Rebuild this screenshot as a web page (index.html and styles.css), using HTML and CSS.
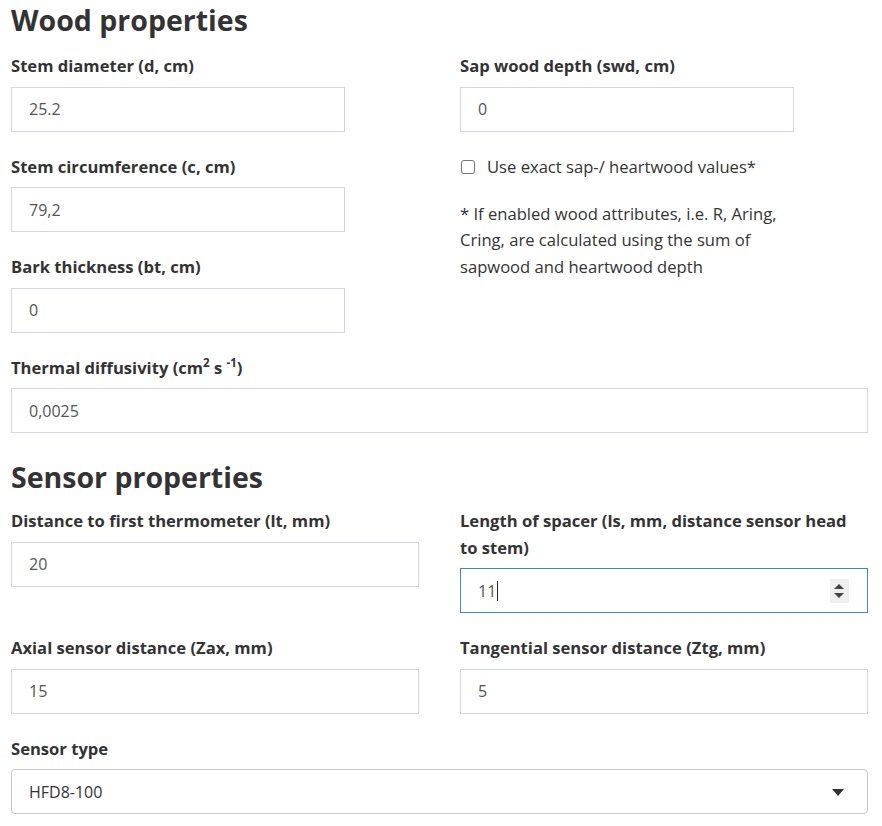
FILE: index.html
```html
<!DOCTYPE html>
<html>
<head>
<meta charset="utf-8">
<link rel="stylesheet" href="styles.css">
</head>
<body>
<div class="page">
  <h2 class="section-title">Wood properties</h2>
  <div class="row row-wood">
    <div class="col">
      <div class="group">
        <label class="lbl">Stem diameter (d, cm)</label>
        <div class="inp narrow">25.2</div>
      </div>
      <div class="group">
        <label class="lbl">Stem circumference (c, cm)</label>
        <div class="inp narrow">79,2</div>
      </div>
      <div class="group">
        <label class="lbl">Bark thickness (bt, cm)</label>
        <div class="inp narrow">0</div>
      </div>
    </div>
    <div class="col">
      <div class="group">
        <label class="lbl">Sap wood depth (swd, cm)</label>
        <div class="inp narrow">0</div>
      </div>
      <div class="check-row">
        <span class="checkbox"></span>
        <span class="check-text">Use exact sap-/ heartwood values*</span>
      </div>
      <p class="note">* If enabled wood attributes, i.e. R, Aring,<br>Cring, are calculated using the sum of<br>sapwood and heartwood depth</p>
    </div>
  </div>
  <div class="group">
    <label class="lbl">Thermal diffusivity (cm<sup>2</sup> s <sup>-1</sup>)</label>
    <div class="inp">0,0025</div>
  </div>

  <h2 class="section-title sensor">Sensor properties</h2>
  <div class="row">
    <div class="group">
      <label class="lbl">Distance to first thermometer (lt, mm)</label>
      <div class="inp">20</div>
    </div>
    <div class="group">
      <label class="lbl">Length of spacer (ls, mm, distance sensor head<br>to stem)</label>
      <div class="inp focused">11<span class="caret"></span>
        <span class="spinner"><span class="up"></span><span class="down"></span></span>
      </div>
    </div>
  </div>
  <div class="row">
    <div class="group">
      <label class="lbl">Axial sensor distance (Zax, mm)</label>
      <div class="inp">15</div>
    </div>
    <div class="group">
      <label class="lbl">Tangential sensor distance (Ztg, mm)</label>
      <div class="inp">5</div>
    </div>
  </div>
  <div class="group">
    <label class="lbl">Sensor type</label>
    <div class="select">HFD8-100<span class="arrow"></span></div>
  </div>
</div>
</body>
</html>
```

FILE: styles.css
```css
* { box-sizing: border-box; }
body {
  margin: 0;
  background: #fff;
  font-family: "Open Sans", Lato, "Liberation Sans", sans-serif;
  color: #333;
}
.page {
  width: 857px;
  margin-left: 11px;
  padding-top: 3px;
}
.section-title {
  margin: 0 0 15px 0;
  font-size: 28.5px;
  line-height: 35px;
  font-weight: 700;
  color: #333;
}
.section-title.sensor {
  margin-top: 27px;
  margin-bottom: 13px;
}
.row {
  display: grid;
  grid-template-columns: 408px 408px;
  column-gap: 41px;
  align-items: start;
}
.row-wood {
  grid-template-columns: 449px 408px;
  column-gap: 0;
}
.group {
  display: flex;
  flex-direction: column;
  margin-bottom: 22px;
}
.lbl {
  display: block;
  font-size: 16.6px;
  font-weight: 700;
  line-height: 26.5px;
  margin-bottom: 7px;
}
.lbl sup {
  font-size: 11.5px;
  line-height: 0;
}
.inp {
  position: relative;
  height: 45px;
  border: 1px solid #d2d6de;
  padding: 0 17px;
  display: flex;
  align-items: center;
  font-size: 16px;
  color: #555;
  background: #fff;
}
.inp.narrow { width: 334px; }
.inp.focused { border-color: #3c8dbc; }
.caret {
  display: inline-block;
  width: 1px;
  height: 20px;
  background: #222;
  margin-left: 1px;
}
.spinner {
  position: absolute;
  right: 18px;
  top: 10px;
  width: 19px;
  height: 24px;
  background: #efefef;
}
.spinner .up, .spinner .down {
  position: absolute;
  left: 4px;
  width: 0; height: 0;
  border-left: 5.5px solid transparent;
  border-right: 5.5px solid transparent;
}
.spinner .up { top: 5px; border-bottom: 5px solid #444; }
.spinner .down { top: 14px; border-top: 5px solid #444; }
.check-row {
  display: flex;
  align-items: center;
  height: 26px;
  margin-bottom: 21px;
}
.checkbox {
  width: 14px;
  height: 14px;
  border: 1.5px solid #767676;
  border-radius: 3px;
  margin-left: 1px;
  margin-right: 12px;
}
.check-text {
  font-size: 16.6px;
  color: #333;
}
.note {
  margin: 0;
  font-size: 16.6px;
  line-height: 26.5px;
  color: #333;
}
.select {
  position: relative;
  height: 45px;
  border: 1px solid #c8c8c8;
  border-radius: 4px;
  padding: 0 17px;
  display: flex;
  align-items: center;
  font-size: 16px;
  color: #333;
}
.arrow {
  position: absolute;
  right: 23px;
  top: 19px;
  width: 0; height: 0;
  border-left: 6px solid transparent;
  border-right: 6px solid transparent;
  border-top: 7px solid #333;
}
```
